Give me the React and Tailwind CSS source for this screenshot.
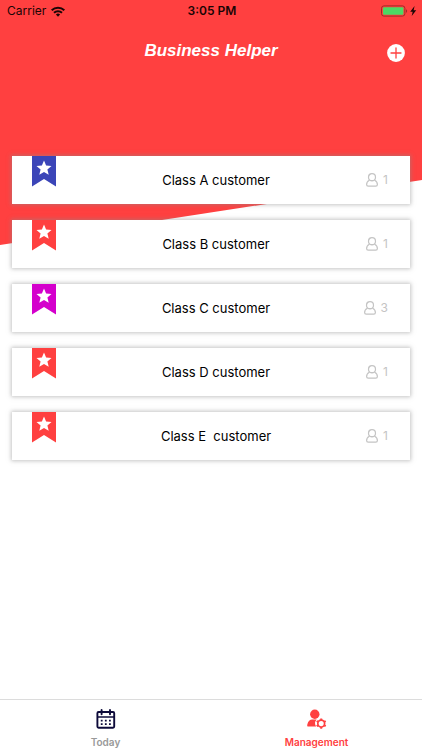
const customerClasses = [
  { name: 'Class A customer', count: 1, color: 'text-[#3b45b8]' },
  { name: 'Class B customer', count: 1, color: 'text-[#ff4040]' },
  { name: 'Class C customer', count: 3, color: 'text-[#d400cc]' },
  { name: 'Class D customer', count: 1, color: 'text-[#ff4040]' },
  { name: 'Class E  customer', count: 1, color: 'text-[#ff4040]' },
];

function WifiIcon() {
  return (
    <svg width="14" height="11" viewBox="0 0 14 11" fill="none" stroke="currentColor" strokeWidth="2" aria-hidden="true">
      <path d="M0.7 4.2a9 9 0 0 1 12.6 0" />
      <path d="M3 6.8a5.7 5.7 0 0 1 8 0" />
      <path d="M4.9 8.5a3.2 3.2 0 0 1 4.2 0L7 10.7Z" fill="currentColor" stroke="none" />
    </svg>
  );
}

function BatteryIcon() {
  return (
    <svg width="36" height="12" viewBox="0 0 36 12" aria-hidden="true">
      <rect x="0.5" y="0.9" width="23.4" height="10.2" rx="2.4" fill="none" stroke="#a02a28" />
      <rect x="2" y="2.3" width="20.4" height="7.4" rx="1" fill="#4cd964" />
      <path d="M25 4.2c1.5.5 1.5 3.1 0 3.6Z" fill="#a02a28" />
      <path d="M33.6 1 29.2 6.7h2.5L30.7 11 35.2 5.2h-2.6Z" fill="#1a0505" />
    </svg>
  );
}

function AddIcon() {
  return (
    <svg width="18" height="18" viewBox="0 0 18 18" aria-hidden="true">
      <circle cx="9" cy="9" r="8.9" fill="white" />
      <path d="M9 4v10M4 9h10" stroke="#ff4040" strokeWidth="1.3" strokeLinecap="round" />
    </svg>
  );
}

function Ribbon({ color }) {
  return (
    <svg className={color} width="24" height="31" viewBox="0 0 24 31" aria-hidden="true">
      <path d="M0 0h24v30.5L12 23 0 30.5Z" fill="currentColor" />
      <path
        d="m12 4.6 2.1 5 5.4.5-4.1 3.5 1.3 5.2L12 16l-4.7 2.8 1.3-5.2-4.1-3.5 5.4-.5Z"
        fill="white"
      />
    </svg>
  );
}

function PersonIcon() {
  return (
    <svg width="12" height="14" viewBox="0 0 12 14" fill="none" stroke="currentColor" strokeWidth="1.2" aria-hidden="true">
      <circle cx="6" cy="4.2" r="3.5" />
      <path d="M3.4 7.2C1.5 8 .6 9.8.6 11.6c0 1 .6 1.6 1.6 1.6h7.6c1 0 1.6-.6 1.6-1.6 0-1.8-.9-3.6-2.8-4.4" />
      <path d="M3.4 7.2c1.6 1 3.6 1 5.2 0" strokeWidth="0.8" />
    </svg>
  );
}

function CalendarIcon() {
  return (
    <svg width="20" height="20" viewBox="0 0 20 20" fill="none" stroke="#0d0a3a" aria-hidden="true">
      <rect x="1.4" y="3" width="16.8" height="15.8" rx="1.2" strokeWidth="1.9" />
      <path d="M1.4 8h16.8" strokeWidth="1.5" />
      <path d="M5.6 1v4.2M14 1v4.2" strokeWidth="1.9" strokeLinecap="round" />
      <path d="M4.8 11.7h1.8M8.9 11.7h1.8M13 11.7h1.8M4.8 15.2h1.8M8.9 15.2h1.8M13 15.2h1.8" strokeWidth="1.8" />
    </svg>
  );
}

function ManagementIcon() {
  return (
    <svg width="20" height="20" viewBox="0 0 20 20" aria-hidden="true">
      <circle cx="7.8" cy="5.2" r="4.7" fill="#ff4040" />
      <path d="M5 10.6h4.6a5.6 5.6 0 0 0-.5 6.9H.9c-.6 0-.8-.3-.7-.9.4-2.8 1.8-6 4.8-6Z" fill="#ff4040" />
      <circle cx="14.2" cy="14.6" r="3.4" fill="none" stroke="#ff4040" strokeWidth="1.7" />
      <path
        d="M14.2 9.4v1.8M14.2 18v1.8M9.7 12l1.5.9M17.2 16.3l1.5.9M18.7 12l-1.5.9M11.2 16.3l-1.5.9"
        stroke="#ff4040"
        strokeWidth="2"
      />
    </svg>
  );
}

function CustomerRow({ name, count, color }) {
  return (
    <li>
      <button
        type="button"
        className="grid h-12 w-full grid-cols-[65px_1fr_55px] items-center bg-white shadow-[0_0_4px_1px_rgba(140,140,140,0.5)]"
      >
        <span className="self-start pl-5">
          <Ribbon color={color} />
        </span>
        <span className="text-center text-[13px] leading-5 whitespace-pre text-black">{name}</span>
        <span className="flex items-center justify-end gap-[5px] pr-[22px] text-xs text-[#c4c4c4]">
          <PersonIcon />
          {count}
        </span>
      </button>
    </li>
  );
}

export default function App() {
  return (
    <div className="relative isolate flex min-h-screen flex-col bg-white font-['Inter','Liberation_Sans',sans-serif]">
      <div className="absolute inset-x-0 top-0 -z-10 h-[245px] bg-[#ff4040] [clip-path:polygon(0_0,100%_0,100%_180px,0_100%)]" />

      <div className="grid h-[22px] grid-cols-3 items-center pr-[5px] pl-[7px] text-xs text-[#1a0505]">
        <span className="flex items-center gap-[5px]">
          Carrier
          <WifiIcon />
        </span>
        <span className="text-center font-semibold">3:05 PM</span>
        <span className="flex justify-end">
          <BatteryIcon />
        </span>
      </div>

      <header className="grid h-[58px] grid-cols-[40px_1fr_40px] items-center">
        <h1 className="col-start-2 text-center font-['Liberation_Sans',Arial,sans-serif] text-[17px] font-bold text-white italic">
          Business Helper
        </h1>
        <button type="button" aria-label="Add class" className="pt-1 pl-[5px]">
          <AddIcon />
        </button>
      </header>

      <main className="flex-1 px-3 pt-[76px] pb-4">
        <ul className="flex flex-col gap-4">
          {customerClasses.map((item) => (
            <CustomerRow key={item.name} {...item} />
          ))}
        </ul>
      </main>

      <nav className="grid h-[51px] grid-cols-2 border-t border-[#dcdcdc] bg-white text-[10px] leading-4 font-semibold">
        <a href="#today" className="flex flex-col items-center gap-[5px] pt-[9px] text-[#999999]">
          <CalendarIcon />
          Today
        </a>
        <a href="#management" aria-current="page" className="flex flex-col items-center gap-[5px] pt-[9px] text-[#ff4040]">
          <ManagementIcon />
          Management
        </a>
      </nav>
    </div>
  );
}
